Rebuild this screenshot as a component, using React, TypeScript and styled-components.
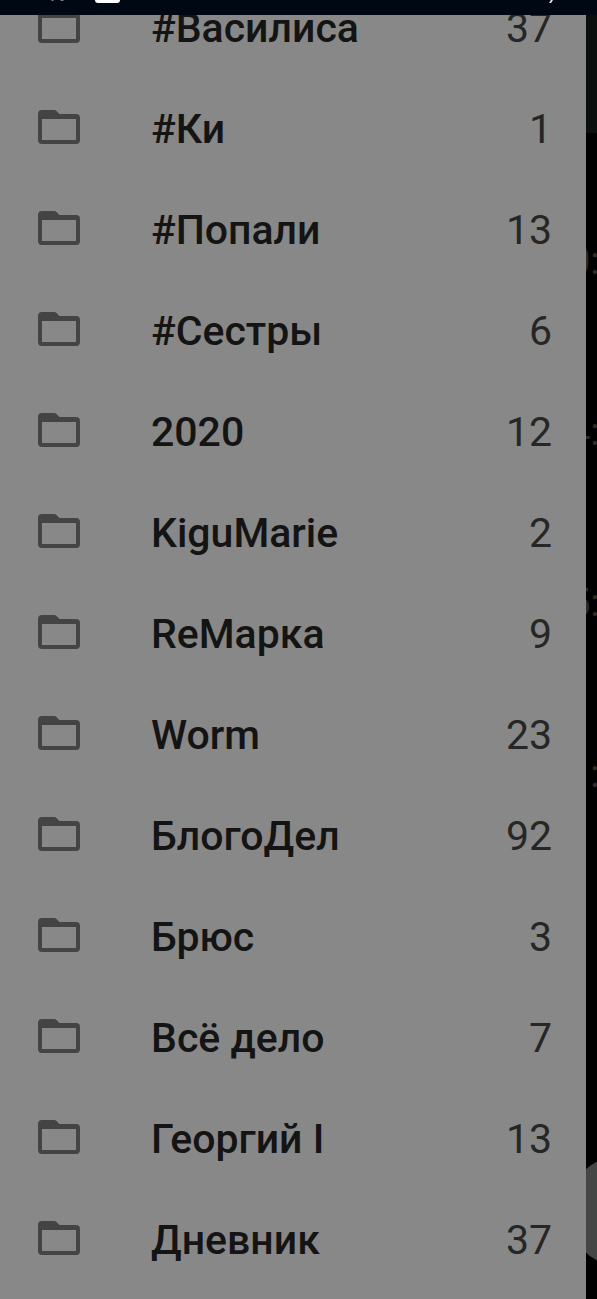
import React from "react";
import styled, { createGlobalStyle } from "styled-components";

const GlobalStyle = createGlobalStyle`
  * { box-sizing: border-box; }
  body {
    margin: 0;
    background: #000;
    font-family: Roboto, "Noto Sans", sans-serif;
  }
`;

const Screen = styled.div`
  position: relative;
  display: flex;
  flex-direction: column;
  height: 100vh;
  overflow: hidden;
`;

const StatusBar = styled.header`
  flex: none;
  display: flex;
  justify-content: space-between;
  height: 15px;
  padding: 0 43px 0 48px;
  background: #000913;
  z-index: 2;
`;

const Content = styled.div`
  position: relative;
  flex: 1;
  min-height: 0;
  overflow: hidden;
`;

const AppBar = styled.div`
  height: 118px;
  background: #0b100f;
`;

const Message = styled.div`
  height: 171px;
  padding: 106px 0 0 calc(100% - 28px);
  overflow: hidden;
  white-space: nowrap;
  font-size: 38px;
  line-height: 44px;
  color: #2c2c2c;
`;

const ComposeButton = styled.button`
  position: absolute;
  right: -82px;
  bottom: 32px;
  width: 112px;
  height: 112px;
  border: 0;
  border-radius: 50%;
  background: #444645;
`;

const Drawer = styled.nav`
  position: absolute;
  inset: 0 11px 0 0;
  display: flex;
  flex-direction: column;
  justify-content: flex-end;
  padding-bottom: 9px;
  background: #888;
`;

const FolderList = styled.ul`
  flex: none;
  margin: 0;
  padding: 0;
  list-style: none;
`;

const FolderLink = styled.a`
  display: flex;
  align-items: center;
  height: 101px;
  padding: 0 34px 0 38px;
  font-size: 41px;
  line-height: 48px;
  color: #141414;
  text-decoration: none;
`;

const FolderName = styled.span`
  flex: 1;
  padding-left: 71px;
  font-weight: 500;
`;

const Count = styled.span`
  color: #262626;
`;

const FolderSvg = styled.svg`
  flex: none;
  margin-bottom: 4px;
`;

const FolderIcon = () => (
  <FolderSvg width="42" height="34" viewBox="0 0 42 34" aria-hidden="true">
    <path
      fill="#444"
      fillRule="evenodd"
      d="M4 0H16Q17.500 0 18.500 1L21.500 4H38Q42 4 42 8V30Q42 34 38 34H4Q0 34 0 30V4Q0 0 4 0ZM4 9V30H38V9Z"
    />
  </FolderSvg>
);

const folders = [
  { name: "#Василиса", count: 37 },
  { name: "#Ки", count: 1 },
  { name: "#Попали", count: 13 },
  { name: "#Сестры", count: 6 },
  { name: "2020", count: 12 },
  { name: "KiguMarie", count: 2 },
  { name: "ReМарка", count: 9 },
  { name: "Worm", count: 23 },
  { name: "БлогоДел", count: 92 },
  { name: "Брюс", count: 3 },
  { name: "Всё дело", count: 7 },
  { name: "Георгий I", count: 13 },
  { name: "Дневник", count: 37 },
];

const times = ["0:", "4:", "5:", "1:"];

export default function App() {
  return (
    <Screen>
      <GlobalStyle />
      <StatusBar>
        <svg width="74" height="4" viewBox="0 0 74 4" aria-hidden="true">
          <path d="M3 0H6L5 1H4ZM12 0H16L15 1H13Z" fill="#77808a" />
          <path d="M47 0H72Q72 3 69 3H50Q47 3 47 0Z" fill="#fff" />
        </svg>
        <svg width="6" height="4" viewBox="0 0 6 4" aria-hidden="true">
          <path d="M3 0H5L3 3H1Z" fill="#e8edf2" />
        </svg>
      </StatusBar>
      <Content>
        <AppBar />
        {times.map((time) => (
          <Message key={time}>{time}</Message>
        ))}
        <ComposeButton aria-label="Написать" />
        <Drawer>
          <FolderList>
            {folders.map((folder) => (
              <li key={folder.name}>
                <FolderLink href="#">
                  <FolderIcon />
                  <FolderName>{folder.name}</FolderName>
                  <Count>{folder.count}</Count>
                </FolderLink>
              </li>
            ))}
          </FolderList>
        </Drawer>
      </Content>
    </Screen>
  );
}
